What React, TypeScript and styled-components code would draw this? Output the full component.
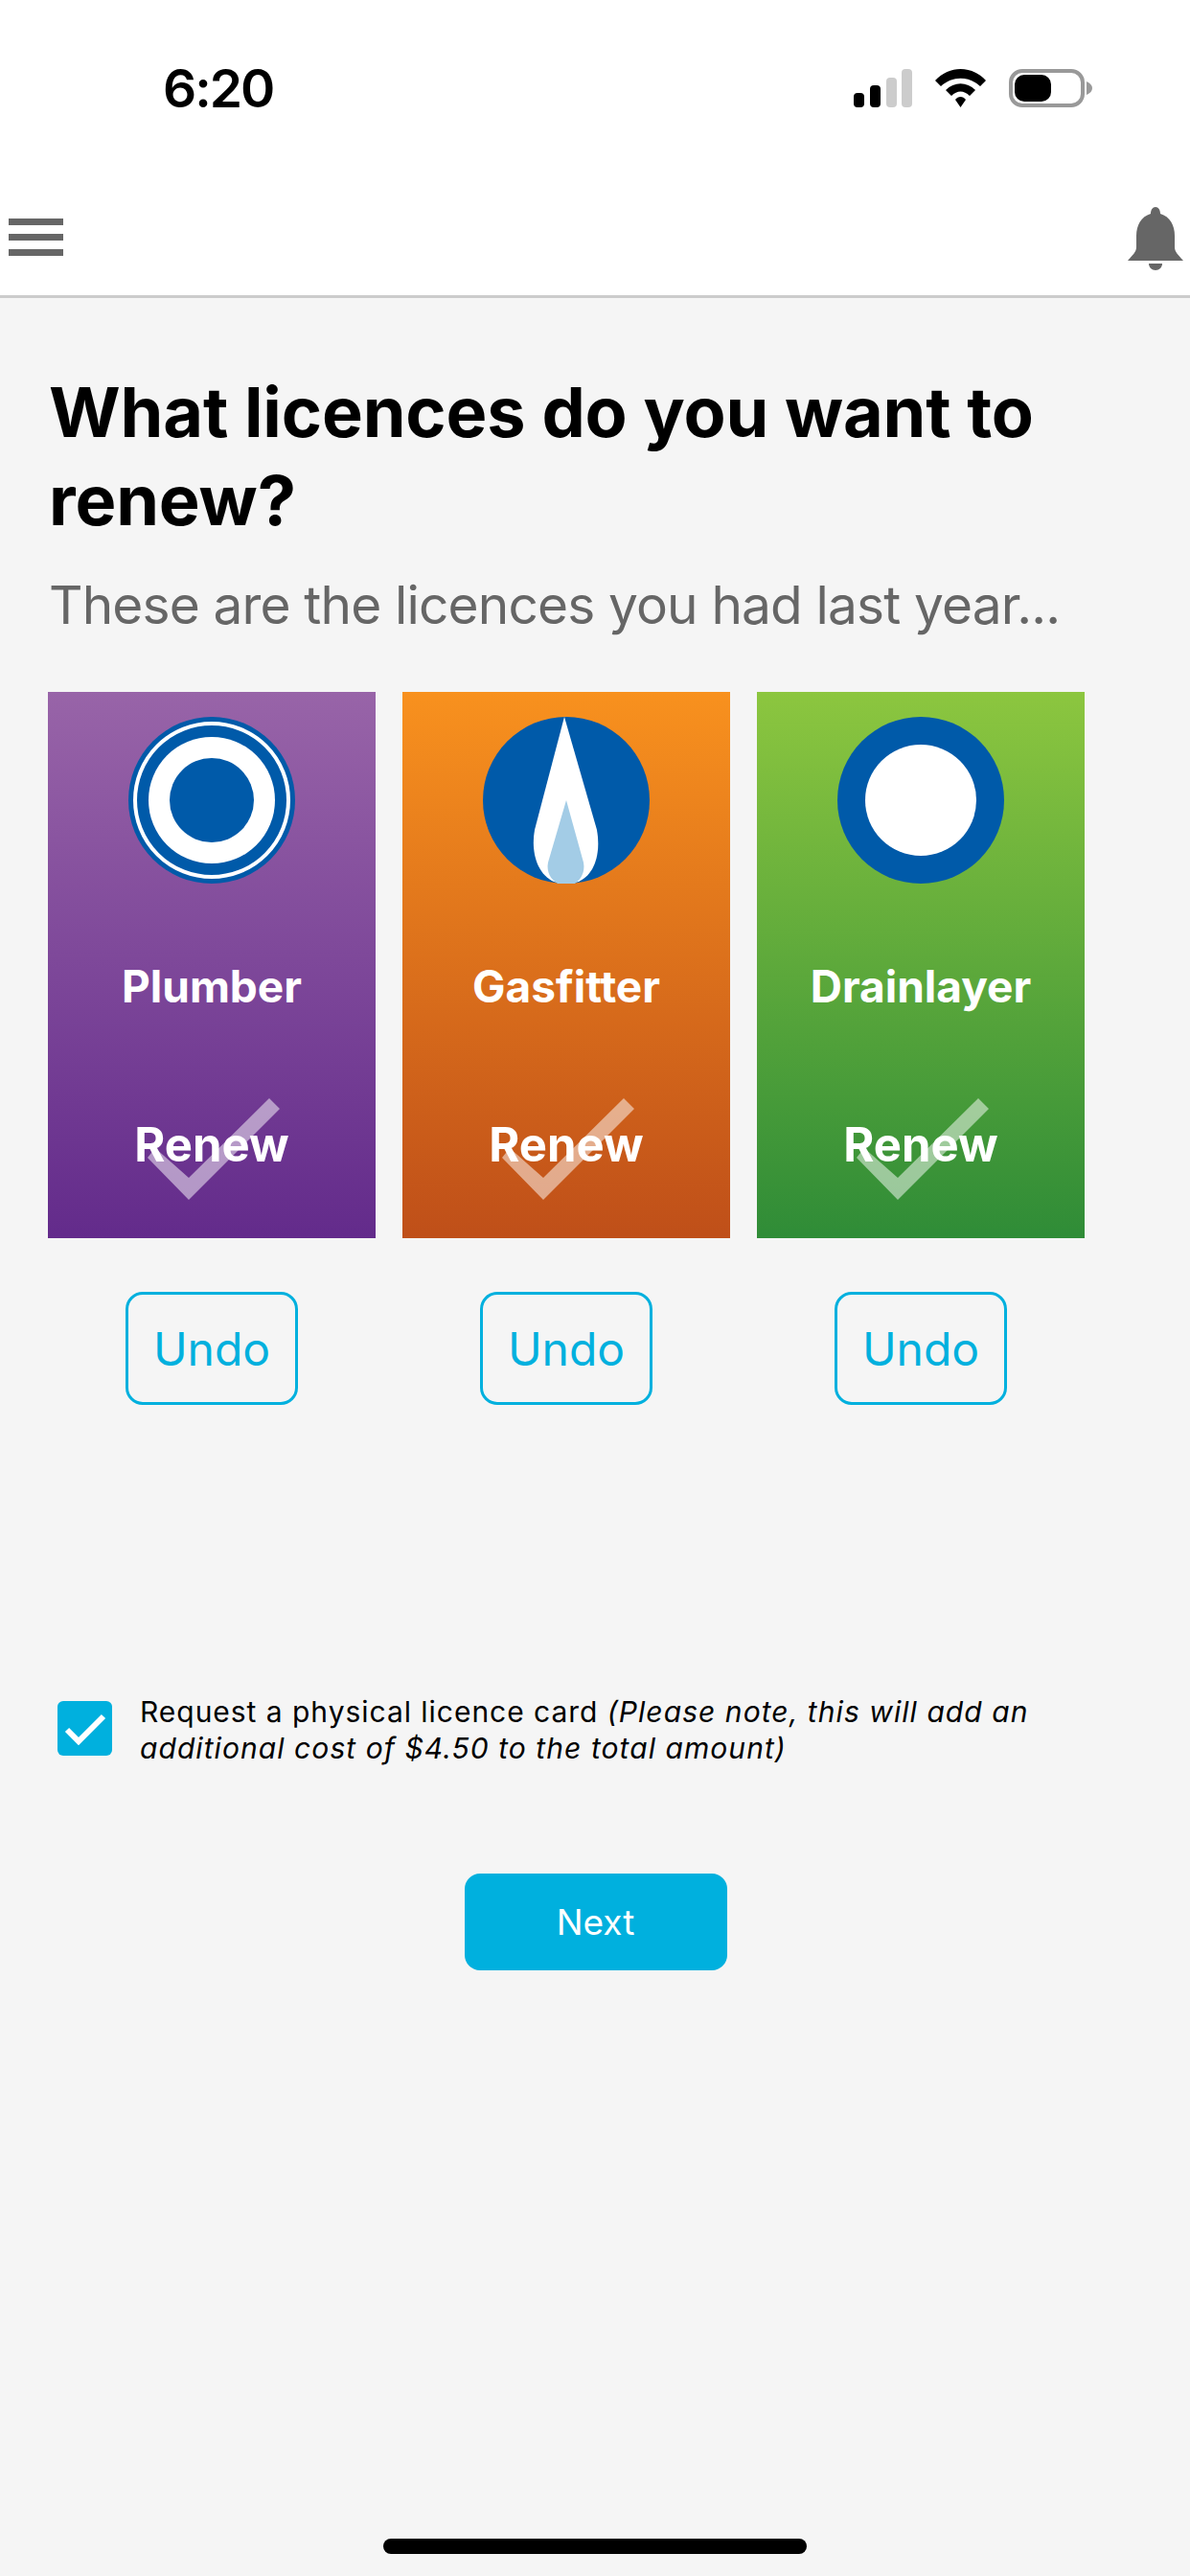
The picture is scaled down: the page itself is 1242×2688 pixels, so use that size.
import React from 'react'
import styled, { createGlobalStyle } from 'styled-components'

const GlobalStyle = createGlobalStyle`
  html, body {
    margin: 0;
    padding: 0;
    background: #f5f5f5;
    font-family: Inter, 'Liberation Sans', sans-serif;
  }
  * { box-sizing: border-box; }
`

const Page = styled.div`
  width: 1242px;
  height: 2688px;
  display: flex;
  flex-direction: column;
  background: #f5f5f5;
  overflow: hidden;
`

const TopArea = styled.header`
  height: 311px;
  flex: none;
  background: #fff;
  border-bottom: 3px solid #ccc;
  display: flex;
  flex-direction: column;
`

const StatusBar = styled.div`
  height: 180px;
  padding: 58px 102px 0 170px;
  display: flex;
  justify-content: space-between;
  align-items: flex-start;
`

const Time = styled.span`
  font-family: Inter, sans-serif;
  font-weight: 600;
  font-size: 55px;
  letter-spacing: -2px;
  line-height: 68px;
  color: #000;
`

const StatusIcons = styled.div`
  margin-top: 14px;
  display: flex;
  align-items: flex-start;
  gap: 24px;
`

const NavBar = styled.nav`
  flex: 1;
  padding: 36px 7px 0 9px;
  display: flex;
  justify-content: space-between;
  align-items: flex-start;
`

const Burger = styled.div`
  width: 57px;
  margin-top: 12px;
  display: flex;
  flex-direction: column;
  gap: 9px;

  span {
    display: block;
    height: 7px;
    background: #666;
  }
`

const Content = styled.main`
  flex: 1;
  padding: 73px 50px 0 51px;
  display: flex;
  flex-direction: column;
`

const Title = styled.h1`
  margin: 0;
  font-size: 72px;
  letter-spacing: -0.15px;
  line-height: 92px;
  font-weight: 700;
  color: #000;
`

const Subtitle = styled.p`
  margin: 28px 0 0;
  font-size: 55px;
  letter-spacing: -0.85px;
  line-height: 70px;
  font-weight: 400;
  color: #666;
`

const Licences = styled.section`
  margin-top: 56px;
  margin-left: -1px;
  display: flex;
  gap: 28px;
`

const Licence = styled.div`
  width: 342px;
  display: flex;
  flex-direction: column;
  align-items: center;
`

const Card = styled.div<{ $from: string; $to: string }>`
  width: 342px;
  height: 570px;
  padding-top: 26px;
  position: relative;
  display: flex;
  flex-direction: column;
  align-items: center;
  background: linear-gradient(180deg, ${p => p.$from}, ${p => p.$to});
  color: #fff;
  font-weight: 700;
  font-size: 46px;
  line-height: 56px;
`

const CardName = styled.div`
  margin-top: 79px;
`

const RenewLabel = styled.div`
  margin-top: 110px;
  position: relative;
  z-index: 1;
  font-size: 49px;
`

const RenewTick = styled.svg`
  position: absolute;
  left: 104px;
  top: 424px;
`

const UndoButton = styled.button`
  margin-top: 56px;
  width: 180px;
  height: 118px;
  padding: 0;
  background: transparent;
  border: 3px solid #00b0de;
  border-radius: 18px;
  color: #00b0de;
  font-family: inherit;
  font-size: 48px;
`

const Consent = styled.div`
  margin-top: 301px;
  margin-left: 9px;
  display: flex;
  align-items: flex-start;
  gap: 29px;
`

const CheckBox = styled.div`
  width: 57px;
  height: 57px;
  margin-top: 8px;
  flex: none;
  border-radius: 6px;
  background: #00b0de;
  display: flex;
  align-items: center;
  justify-content: center;
`

const ConsentText = styled.p`
  margin: 0;
  width: 950px;
  font-size: 30px;
  line-height: 38px;
  letter-spacing: 0.97px;
  color: #000;

  em {
    font-style: italic;
    letter-spacing: 1.06px;
  }
`

const NextButton = styled.button`
  align-self: center;
  margin-top: 112px;
  width: 274px;
  height: 101px;
  padding: 0;
  border: none;
  border-radius: 16px;
  background: #00b0de;
  color: #fff;
  font-family: inherit;
  font-size: 37px;
`

const HomeBar = styled.div`
  flex: none;
  height: 39px;
  display: flex;
  justify-content: center;

  span {
    display: block;
    width: 442px;
    height: 16px;
    border-radius: 8px;
    background: #000;
  }
`

const blue = '#005aa9'

const PlumberIcon = () => (
  <svg width="174" height="174" viewBox="0 0 174 174">
    <circle cx="87" cy="87" r="87" fill={blue} />
    <circle cx="87" cy="87" r="80" fill="none" stroke="#fff" strokeWidth="4" />
    <circle cx="87" cy="87" r="66" fill="#fff" />
    <circle cx="87" cy="87" r="44" fill={blue} />
  </svg>
)

const GasIcon = () => (
  <svg width="174" height="174" viewBox="0 0 174 174">
    <circle cx="87" cy="87" r="87" fill={blue} />
    <path d="M85 0 L119 118 C123 140 118 164 100 172 Q87 176 74 172 C56 164 50 140 54 118 Z" fill="#fff" />
    <path d="M87 87 L105 152 C107 162 102 170 96 174 L78 174 C71 170 66 162 68 152 Z" fill="#a3cce6" />
  </svg>
)

const DrainIcon = () => (
  <svg width="174" height="174" viewBox="0 0 174 174">
    <circle cx="87" cy="87" r="87" fill={blue} />
    <circle cx="87" cy="87" r="58" fill="#fff" />
  </svg>
)

const licences = [
  { name: 'Plumber', from: '#9864a8', to: '#632b8b', Icon: PlumberIcon },
  { name: 'Gasfitter', from: '#f8911e', to: '#bf4f19', Icon: GasIcon },
  { name: 'Drainlayer', from: '#8cc63f', to: '#2f8c37', Icon: DrainIcon },
]

function App() {
  return (
    <>
      <GlobalStyle />
      <Page>
        <TopArea>
          <StatusBar>
            <Time>6:20</Time>
            <StatusIcons>
              <svg width="61" height="40" viewBox="0 0 61 40">
                <rect x="0" y="25" width="11" height="15" rx="4" fill="#000" />
                <rect x="17" y="17" width="11" height="23" rx="4" fill="#000" />
                <rect x="34" y="9" width="11" height="31" rx="4" fill="#ccc" />
                <rect x="50" y="0" width="11" height="40" rx="4" fill="#ccc" />
              </svg>
              <svg width="53" height="40" viewBox="0 0 53 40">
                <path d="M0 12 C15 -4 38 -4 53 12 L47 18 C35 7 18 7 6 18 Z" fill="#000" />
                <path d="M11 22 C20 13 33 13 42 22 L36 28 C30 22 23 22 17 28 Z" fill="#000" />
                <path d="M21 32 C24 28 29 28 32 32 L26.5 40 Z" fill="#000" />
              </svg>
              <svg width="87" height="40" viewBox="0 0 87 40">
                <rect x="2" y="2" width="75" height="36" rx="12" fill="none" stroke="#999" strokeWidth="4" />
                <rect x="6" y="6" width="38" height="28" rx="10" fill="#000" />
                <path d="M81 13 C85 15 87 17 87 20 C87 23 85 25 81 27 Z" fill="#999" />
              </svg>
            </StatusIcons>
          </StatusBar>
          <NavBar>
            <Burger><span /><span /><span /></Burger>
            <svg width="58" height="66" viewBox="0 0 58 66">
              <path d="M29 0 C32 0 34 3 34 7 C44 10 49 19 49 30 L49 42 C49 47 53 50 58 56 L0 56 C5 50 9 47 9 42 L9 30 C9 19 14 10 24 7 C24 3 26 0 29 0 Z" fill="#666" />
              <path d="M22 59 L36 59 C36 63 33 66 29 66 C25 66 22 63 22 59 Z" fill="#666" />
            </svg>
          </NavBar>
        </TopArea>
        <Content>
          <Title>What licences do you want to renew?</Title>
          <Subtitle>These are the licences you had last year...</Subtitle>
          <Licences>
            {licences.map(({ name, from, to, Icon }) => (
              <Licence key={name}>
                <Card $from={from} $to={to}>
                  <Icon />
                  <CardName>{name}</CardName>
                  <RenewLabel>Renew</RenewLabel>
                  <RenewTick width="138" height="106" viewBox="0 0 138 106">
                    <path d="M0 62 L8 52 L43 83 L127 0 L138 11 L43 106 Z" fill="#fff" fillOpacity="0.5" />
                  </RenewTick>
                </Card>
                <UndoButton>Undo</UndoButton>
              </Licence>
            ))}
          </Licences>
          <Consent>
            <CheckBox>
              <svg width="44" height="34" viewBox="0 0 44 34">
                <path d="M3 18 L15 30 L41 4" fill="none" stroke="#fff" strokeWidth="6" />
              </svg>
            </CheckBox>
            <ConsentText>
              Request a physical licence card <em>(Please note, this will add an</em>
              <br />
              <em>additional cost of $4.50 to the total amount)</em>
            </ConsentText>
          </Consent>
          <NextButton>Next</NextButton>
        </Content>
        <HomeBar><span /></HomeBar>
      </Page>
    </>
  )
}

export default App
